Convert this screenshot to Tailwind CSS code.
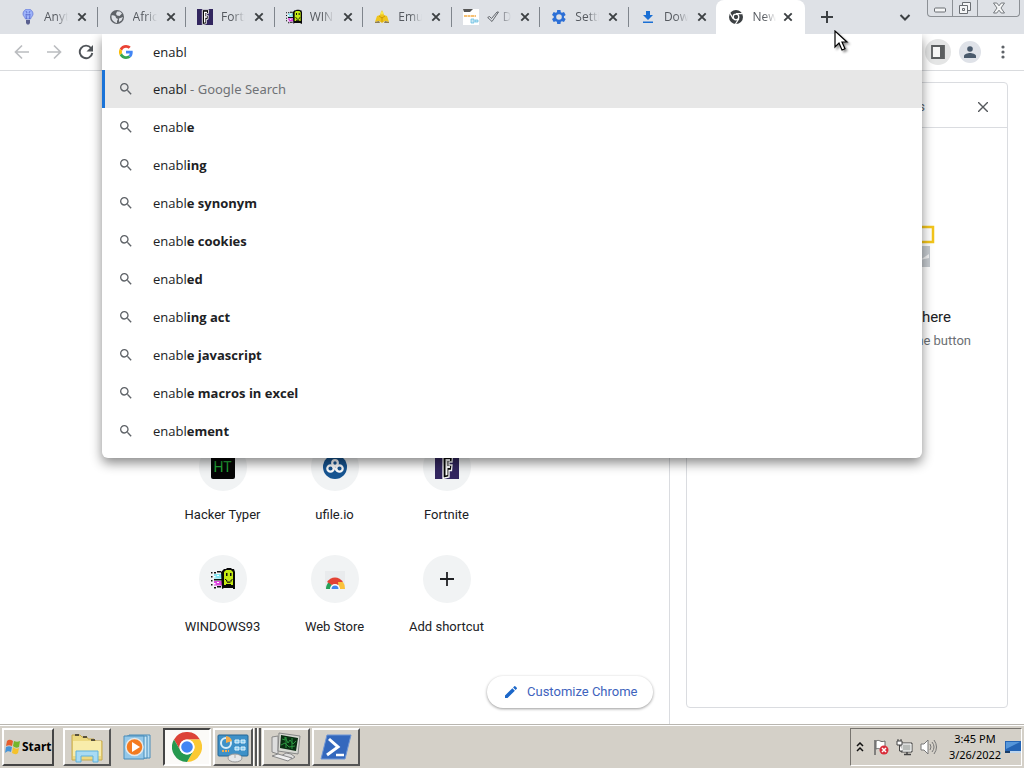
<!DOCTYPE html>
<html lang="en">
<head>
<meta charset="utf-8">
<meta name="viewport" content="width=device-width, initial-scale=1">
<title>New Tab</title>
<script src="https://cdn.jsdelivr.net/npm/@tailwindcss/browser@4"></script>
</head>
<body class="relative flex h-screen flex-col overflow-hidden bg-white font-['Open_Sans','Noto_Sans',sans-serif] text-[13px] text-[#202124]">

<svg class="hidden" aria-hidden="true">
  <symbol id="x" viewBox="0 0 10 10"><path d="M1.300 1.300 8.700 8.700M8.700 1.300 1.300 8.700" stroke="currentColor" stroke-width="1.900"/></symbol>
  <symbol id="search" viewBox="0 0 24 24"><path fill="currentColor" d="M15.5 14h-.79l-.28-.27A6.47 6.47 0 0 0 16 9.5 6.5 6.5 0 1 0 9.5 16c1.61 0 3.09-.59 4.23-1.57l.27.28v.79l5 4.99L20.49 19l-4.99-5zm-6 0C7.01 14 5 11.99 5 9.5S7.01 5 9.5 5 14 7.01 14 9.5 11.99 14 9.5 14z"/></symbol>
  <symbol id="win93" viewBox="0 0 24 24">
    <path d="M0 5h1.500v1.500H0zM3 5h2v1.500H3zM6 4h4v1.500H6zM0 9h1.500v1.500H0zM0 13h1.500v1.500H0zM0 17h1.500v1.500H0zM3 20h2v1.500H3zM6 19h4v1.500H6zM3 12h8v1.500H3z" fill="#111"/>
    <path d="M3 7h8v4.500H3z" fill="#86e6f2"/><path d="M3 14h8v4.500H3z" fill="#dc45de"/><path d="M3 9h1.500v1.500H3zM6 8h2v1H6zM3 16h1.500v1.500H3zM6 15h2v1H6z" fill="#fff"/>
    <path d="M10 5 13 2h2l1-1h4l1 1h2l1 3v17h-2v-1h-9l-2 1z" fill="#080808"/><path d="M13 5l2-2h5l2 2v13h-2v-1h-5v1h-2z" fill="#c5ea12"/>
    <path d="M15 6h1.500v3H15zM19 6h1.500v3H19zM14 12h1.200v1H14zM15 13h1.200v1.500H15zM16 14.500h3.500v1.200H16zM19.500 13h1.200v1.500h-1.200zM20.500 12h1v1h-1z" fill="#111"/>
  </symbol>
  <symbol id="fort" viewBox="0 0 24 24"><path fill="#32265f" d="M0 0h24v24H0z"/><path d="M8 1h9.500L17 7h-3v3h3l-.5 5.500H14V22l-6 1.500z" fill="#080808" stroke="#fff" stroke-width="1.300"/><path d="M10.500 4H15v2h-2.500v5H15v2h-2.500v7l-2 .5z" fill="#fff"/></symbol>
  <symbol id="pointer" viewBox="0 0 16 22"><path d="M1 1v16l4-4 3 7 3-1.300-3-6.700h5z" fill="#fff" stroke="#000" stroke-width="1.200"/></symbol>
</svg>

<header class="flex h-[34px] shrink-0 bg-[#dee1e6] pl-2">
  <nav aria-label="Tabs" class="grid w-[797px] shrink-0 grid-cols-9 text-xs text-[#55595f]">
    <div class="flex items-center pl-3">
      <svg class="size-4 shrink-0" viewBox="0 0 16 16"><path d="M8 0a5 5 0 0 0-5 5c0 2 2 3 2.500 5h5C11 8 13 7 13 5a5 5 0 0 0-5-5z" fill="#9db3fa" stroke="#6478d8" stroke-width=".8"/><path d="M6.500 10 6 5l2 1 2-1-.5 5M6 2l1 2M10 2 9 4" stroke="#5664c8" stroke-width=".8" fill="none"/><path d="M6 11h4v3l-1 1.500H7L6 14z" fill="#5a6090"/></svg>
      <a href="#" class="ml-2 w-6 shrink-0 overflow-hidden whitespace-nowrap mask-r-from-50%">Anything</a>
      <button aria-label="Close" class="ml-[9px]"><svg class="size-2.5 text-[#3c4043]"><use href="#x"/></svg></button>
    </div>
    <div class="flex items-center"><span class="mr-[11px] h-5 w-px shrink-0 bg-[#7f858c]"></span>
      <svg class="size-4 shrink-0" viewBox="0 0 16 16"><circle cx="8" cy="8" r="7" fill="#5f6368"/><path d="M2.500 6.500C5 6 7 7 7 9l2 1-1 2v2C5 13.500 2 11 2.500 6.500zM8 2.500h3l2 2-2.500 2.500L8 6.500 7 5zM10 9.500l4-1.500-1.500 3.500L10 13z" fill="#dee1e6"/></svg>
      <a href="#" class="ml-2 w-6 shrink-0 overflow-hidden whitespace-nowrap mask-r-from-50%">Africa</a>
      <button aria-label="Close" class="ml-[9px]"><svg class="size-2.5 text-[#3c4043]"><use href="#x"/></svg></button>
    </div>
    <div class="flex items-center"><span class="mr-[11px] h-5 w-px shrink-0 bg-[#7f858c]"></span>
      <svg class="size-4 shrink-0"><use href="#fort"/></svg>
      <a href="#" class="ml-2 w-6 shrink-0 overflow-hidden whitespace-nowrap mask-r-from-50%">Fortnite</a>
      <button aria-label="Close" class="ml-[9px]"><svg class="size-2.5 text-[#3c4043]"><use href="#x"/></svg></button>
    </div>
    <div class="flex items-center"><span class="mr-[11px] h-5 w-px shrink-0 bg-[#7f858c]"></span>
      <svg class="size-4 shrink-0"><use href="#win93"/></svg>
      <a href="#" class="ml-2 w-6 shrink-0 overflow-hidden whitespace-nowrap mask-r-from-50%">WINDOWS93</a>
      <button aria-label="Close" class="ml-[9px]"><svg class="size-2.5 text-[#3c4043]"><use href="#x"/></svg></button>
    </div>
    <div class="flex items-center"><span class="mr-[11px] h-5 w-px shrink-0 bg-[#7f858c]"></span>
      <svg class="size-4 shrink-0" viewBox="0 0 16 16"><path d="M8 1 10 6l3 1 2 6-4-1-3 2-3-2-4 1 2-6 3-1z" fill="#efc51d"/><path d="m5 7 3 2 3-2M8 8v5" stroke="#c48e00" stroke-width=".8" fill="none"/><path d="M1 13l4-1 1 2H1zM11 12l4 1v1h-5z" fill="#8b7c55"/><circle cx="8" cy="4" r="1.500" fill="#f9e94c"/></svg>
      <a href="#" class="ml-2 w-6 shrink-0 overflow-hidden whitespace-nowrap mask-r-from-50%">Emulator</a>
      <button aria-label="Close" class="ml-[9px]"><svg class="size-2.5 text-[#3c4043]"><use href="#x"/></svg></button>
    </div>
    <div class="flex items-center"><span class="mr-[11px] h-5 w-px shrink-0 bg-[#7f858c]"></span>
      <svg class="size-4 shrink-0" viewBox="0 0 16 16"><path fill="#fff" d="M0 0h16v16H0z"/><path d="M0 0h10L7 3H1z" fill="#555"/><path d="M1 7h12" stroke="#f3ac45" stroke-width="1.500" stroke-dasharray="3 .5"/><path d="M8 10h3v4H8zM12 11h3v2h-3z" fill="#c8e7f4" stroke="#5ab9df" stroke-width=".7"/></svg>
      <a href="#" class="ml-2 flex w-6 shrink-0 items-center gap-1 overflow-hidden whitespace-nowrap mask-r-from-50%"><svg class="size-3 shrink-0" viewBox="0 0 12 12"><path d="m.7 6.500 1.800-1 2 2L10 1h1.500L5 10.500z" fill="none" stroke="#55595f" stroke-width=".9"/></svg>Download</a>
      <button aria-label="Close" class="ml-[9px]"><svg class="size-2.5 text-[#3c4043]"><use href="#x"/></svg></button>
    </div>
    <div class="flex items-center"><span class="mr-[11px] h-5 w-px shrink-0 bg-[#7f858c]"></span>
      <svg class="size-4 shrink-0" viewBox="0 0 24 24"><path fill="#2c6fd6" d="M19.400 13a7.500 7.500 0 0 0 0-2l2.600-2-2.500-4.400-3 1.200-1.800-1L14.200 1.500H9.300l-.5 3.300-1.800 1-3-1.200L1.500 9l2.600 2a7.500 7.500 0 0 0 0 2l-2.600 2L4 19.400l3-1.200 1.800 1 .5 3.300h4.900l.5-3.300 1.800-1 3 1.200L22 15zM12 16.200a4.200 4.200 0 1 1 0-8.400 4.200 4.200 0 0 1 0 8.400z"/></svg>
      <a href="#" class="ml-2 w-6 shrink-0 overflow-hidden whitespace-nowrap mask-r-from-50%">Settings</a>
      <button aria-label="Close" class="ml-[9px]"><svg class="size-2.5 text-[#3c4043]"><use href="#x"/></svg></button>
    </div>
    <div class="flex items-center"><span class="mr-[11px] h-5 w-px shrink-0 bg-[#7f858c]"></span>
      <svg class="size-4 shrink-0" viewBox="0 0 16 16"><path fill="#1a6fd4" d="M6 2h4v4h3l-5 5-5-5h3zM3 12.500h10V14H3z"/></svg>
      <a href="#" class="ml-2 w-6 shrink-0 overflow-hidden whitespace-nowrap mask-r-from-50%">Downloads</a>
      <button aria-label="Close" class="ml-[9px]"><svg class="size-2.5 text-[#3c4043]"><use href="#x"/></svg></button>
    </div>
    <div class="flex items-center rounded-t-lg bg-white pl-3">
      <svg class="size-4 shrink-0" viewBox="0 0 16 16"><circle cx="8" cy="8" r="7" fill="#3c4043"/><circle cx="8" cy="8" r="2.800" fill="#3c4043" stroke="#fff" stroke-width="1.300"/><path d="M8 4.700h6.500M5.100 9.600 2 4.200M10.900 9.600 7.500 15" stroke="#fff" stroke-width="1.200"/></svg>
      <a href="#" class="ml-2 w-6 shrink-0 overflow-hidden whitespace-nowrap mask-r-from-50%">New Tab</a>
      <button aria-label="Close" class="ml-[7px]"><svg class="size-2.5 text-[#3c4043]"><use href="#x"/></svg></button>
    </div>
  </nav>
  <button aria-label="New tab" class="ml-4 shrink-0"><svg class="size-3" viewBox="0 0 12 12"><path d="M6 0v12M0 6h12" stroke="#3c4043" stroke-width="2"/></svg></button>
  <button aria-label="Search tabs" class="mr-4 ml-auto"><svg class="size-3" viewBox="0 0 12 12"><path d="m1.500 4 4.500 4.500L10.500 4" fill="none" stroke="#3c4043" stroke-width="2"/></svg></button>
  <div class="mr-1 flex h-[17px] w-[93px] rounded-b border border-t-0 border-[#8c9095]">
    <button aria-label="Minimize" class="flex w-[25px] items-center justify-center border-r border-[#8c9095]"><svg class="mt-1 h-1.5 w-3" viewBox="0 0 12 6"><rect x=".5" y="1" width="11" height="4" rx="1" fill="#f5f6f7" stroke="#6a6e73"/></svg></button>
    <button aria-label="Restore" class="flex w-[25px] items-center justify-center border-r border-[#8c9095]"><svg class="size-3.5" viewBox="0 0 14 14"><path d="M4.500 1.500h8v8h-8z" fill="#f5f6f7" stroke="#6a6e73"/><path d="M1.500 4.500h8v8h-8z" fill="#f5f6f7" stroke="#6a6e73"/><path d="M4.500 7.500h2v2h-2z" fill="none" stroke="#6a6e73"/></svg></button>
    <button aria-label="Close window" class="flex flex-1 items-center justify-center"><svg class="h-3 w-3.5" viewBox="0 0 14 12"><path d="M1.500 1h3.300L7 3.800 9.200 1h3.300L9 6l3.500 5H9.200L7 8.200 4.800 11H1.500L5 6z" fill="#f5f6f7" stroke="#6a6e73" stroke-width=".9"/></svg></button>
  </div>
</header>

<div class="flex h-[37px] shrink-0 items-center border-b border-[#d9dbde] pl-3.5 text-[#5f6368]">
  <button aria-label="Back" class="text-[#bbbdc0]"><svg class="size-4" viewBox="0 0 16 16"><path d="M15 8H2M8 1.500 1.500 8 8 14.500" fill="none" stroke="currentColor" stroke-width="1.700"/></svg></button>
  <button aria-label="Forward" class="ml-4 text-[#bbbdc0]"><svg class="size-4" viewBox="0 0 16 16"><path d="M1 8h13M8 1.500 14.500 8 8 14.500" fill="none" stroke="currentColor" stroke-width="1.700"/></svg></button>
  <button aria-label="Reload" class="ml-4"><svg class="size-4" viewBox="0 0 16 16"><path d="M13 4a6.300 6.300 0 1 0 1.300 5" fill="none" stroke="#505459" stroke-width="1.900"/><path d="M15 1v6.500H8.500z" fill="#505459"/></svg></button>
  <button aria-label="Side panel" class="ml-auto flex size-[26px] items-center justify-center rounded-full bg-[#e4e5e5]"><svg class="size-3.5" viewBox="0 0 14 14"><path d="M1 1h12v12H1z" fill="#f6f6f5" stroke="#5b5e5f" stroke-width="1.800"/><path d="M9 1h4v12H9z" fill="#5b5e5f"/></svg></button>
  <button aria-label="Profile" class="ml-2 flex size-[22px] items-center justify-center rounded-full bg-[#dfe2e8]"><svg class="size-3" viewBox="0 0 12 12"><circle cx="6" cy="3" r="2.800" fill="#4a5a6c"/><path d="M0 12V10c0-2 4-3 6-3s6 1 6 3v2z" fill="#4a5a6c"/></svg></button>
  <button aria-label="Menu" class="mr-[19px] ml-5"><svg class="h-3.5 w-1" viewBox="0 0 4 14"><g fill="#5f6368"><circle cx="2" cy="2" r="1.600"/><circle cx="2" cy="7" r="1.600"/><circle cx="2" cy="12" r="1.600"/></g></svg></button>
</div>

<div class="flex min-h-0 flex-1 font-[Roboto,sans-serif]">
  <main class="flex flex-1 flex-col items-center justify-end border-r border-[#dadce0] pb-4">
    <div class="grid grid-cols-3 text-center">
      <a href="#" class="flex h-28 w-28 flex-col items-center"><span class="flex size-12 items-center justify-center rounded-full bg-[#f1f3f4]"><span class="flex size-6 items-center justify-center rounded-xs bg-[#050505] text-sm text-[#22a637]">HT</span></span><span class="mt-3.5">Hacker Typer</span></a>
      <a href="#" class="flex h-28 w-28 flex-col items-center"><span class="flex size-12 items-center justify-center rounded-full bg-[#f1f3f4]"><svg class="size-6" viewBox="0 0 24 24"><circle cx="12" cy="12" r="12" fill="#175592"/><g fill="none" stroke="#fff" stroke-width="2.200"><circle cx="12" cy="8" r="2.800"/><circle cx="7.500" cy="13.500" r="3.200"/><circle cx="16.500" cy="13.500" r="3.200"/><path d="m9.500 11 5 5"/></g></svg></span><span class="mt-3.5">ufile.io</span></a>
      <a href="#" class="flex h-28 w-28 flex-col items-center"><span class="flex size-12 items-center justify-center rounded-full bg-[#f1f3f4]"><svg class="size-6"><use href="#fort"/></svg></span><span class="mt-3.5">Fortnite</span></a>
      <a href="#" class="flex h-28 w-28 flex-col items-center"><span class="flex size-12 items-center justify-center rounded-full bg-[#f1f3f4]"><svg class="size-6"><use href="#win93"/></svg></span><span class="mt-3.5">WINDOWS93</span></a>
      <a href="#" class="flex h-28 w-28 flex-col items-center"><span class="flex size-12 items-center justify-center rounded-full bg-[#f1f3f4]"><svg class="size-6" viewBox="0 0 24 24"><path fill="#e9ebed" d="M2 4h20v18H2z"/><path d="M3 22a9 9 0 0 1 3-7l4 4-1 3z" fill="#27a15a"/><path d="M4 15a9.500 9.500 0 0 1 16 0l-5 3H9z" fill="#e34234"/><path d="M15 15h5a10 10 0 0 1 2 7h-6z" fill="#fbc23c"/><path d="M7 22a5 5 0 0 1 10 0z" fill="#fff"/><path d="M8.500 22a3.500 3.500 0 0 1 7 0z" fill="#4286ee"/></svg></span><span class="mt-3.5">Web Store</span></a>
      <button class="flex h-28 w-28 flex-col items-center"><span class="flex size-12 items-center justify-center rounded-full bg-[#f1f3f4]"><svg class="size-3.5" viewBox="0 0 14 14"><path d="M7 0v14M0 7h14" stroke="#202124" stroke-width="1.800"/></svg></span><span class="mt-3.5">Add shortcut</span></button>
    </div>
    <button class="mt-[9px] mr-4 flex h-8 w-[166px] items-center gap-2 self-end rounded-full bg-white pl-4 text-[#3e63bd] shadow-[0_1px_3px_#0006]"><svg class="size-4" viewBox="0 0 24 24"><path fill="#1b67c9" d="M3 17.250V21h3.750L17.800 9.940l-3.750-3.750zM20.700 7.040a1 1 0 0 0 0-1.410L18.370 3.300a1 1 0 0 0-1.410 0l-1.830 1.830 3.750 3.750z"/></svg>Customize Chrome</button>
  </main>
  <aside class="w-[354px] shrink-0 px-4 pt-[11px] pb-4">
    <div class="flex h-full flex-col rounded border border-[#dadce0]">
      <div class="flex h-[45px] shrink-0 items-center justify-end border-b border-[#dadce0] pt-1 pr-[19px] text-[#5f6368]"><span>Bookmarks</span><button aria-label="Close side panel" class="ml-[53px]"><svg class="size-2.5" viewBox="0 0 10 10"><path d="m0 0 10 10M10 0 0 10" stroke="#55585c" stroke-width="1.400"/></svg></button></div>
      <div class="flex flex-col items-end pt-[97px] pr-9">
        <svg class="mr-9 h-11 w-40" viewBox="0 0 160 44"><path d="M1 2h157v15H1z" fill="none" stroke="#f3c51b" stroke-width="2.500"/><path d="M2 21h153v21H2z" fill="#c6cbd0"/><path d="m145 35 9-6v4z" fill="#f3f4f5"/></svg>
        <p class="mt-[38px] mr-5 text-[15px] leading-5">You'll find your reading list here</p>
        <p class="mt-1 leading-5 text-[#6b6f74]">To add a page, click the button</p>
      </div>
    </div>
  </aside>
</div>

<footer class="flex h-11 shrink-0 items-center border-t border-[#b9b6b0] bg-[#d4d0c8] px-0.5 text-[11px] text-black shadow-[inset_0_1px_0_#fff]">
  <button class="flex h-[38px] w-[52px] items-center border-2 border-t-white border-r-[#444] border-b-[#444] border-l-white font-['Noto_Sans','Open_Sans',sans-serif] text-xs font-bold">
    <svg class="size-[18px] shrink-0" viewBox="0 0 18 18"><path d="M3 3c2-2 4-1 6 0L8 8C6 7 4 7 2 8z" fill="#e65d2b"/><path d="M10 3c2 1 4 1 6 0l-1 6c-2 1-4 1-6-1z" fill="#75b62c"/><path d="M2 9c2-1 4-1 6 0l-1 5c-2-1-4-1-6 1z" fill="#4594d7"/><path d="M9 9c2 2 4 2 6 1l-1 5c-2 2-4 1-6 0z" fill="#f4c22c"/></svg>Start</button>
  <button aria-label="Explorer" class="ml-[9px] flex h-[38px] w-12 items-center justify-center border-2 border-t-white border-r-[#555] border-b-[#555] border-l-white"><svg class="size-8" viewBox="0 0 32 32"><path d="M1 4h8l2 2h5l1 2h6l2 2h6v19H1z" fill="#edd981" stroke="#c6a94b"/><path d="M2 10h28v15H2z" fill="#f8ecaa"/><path d="M4 3h4v2H4zM12 5h4v2h-4zM20 8h4v2h-4z" fill="#59513b"/><path d="M5 31V20h22v11h-5v-6H10v6z" fill="#a8dbf3" stroke="#5eb1dc"/></svg></button>
  <button aria-label="Media player" class="ml-1 flex h-[38px] w-11 items-center justify-center"><svg class="size-7" viewBox="0 0 28 28"><path d="M6 2h21v23H6z" fill="#b9ddf2" stroke="#498cba"/><path d="M4 3h20v22H4z" fill="#c9e8f8" stroke="#498cba"/><path d="M1 3h20v23H1z" fill="#94c8e9" stroke="#498cba"/><circle cx="11.500" cy="14" r="8.500" fill="#f47b20" stroke="#e5e9eb" stroke-width="1.500"/><path d="m9 9 8 5-8 5z" fill="#fff"/></svg></button>
  <button aria-label="Chrome" class="ml-1 flex h-[38px] w-12 items-center justify-center border-2 border-t-[#444] border-r-white border-b-white border-l-[#444] bg-[#fbfaf8]"><svg class="size-[30px]" viewBox="0 0 30 30"><path d="M2 7.500A15 15 0 0 1 28 7.500H15A7.500 7.500 0 0 0 8.500 18.800z" fill="#dc4338"/><path d="M28 7.500A15 15 0 0 1 15 30l6.500-11.200A7.500 7.500 0 0 0 15 7.500z" fill="#fbc934"/><path d="M15 30A15 15 0 0 1 2 7.500l6.500 11.300a7.500 7.500 0 0 0 13 0z" fill="#25994f"/><circle cx="15" cy="15" r="7.500" fill="#fff"/><circle cx="15" cy="15" r="5.800" fill="#4285f4"/></svg></button>
  <button aria-label="Control Panel" class="ml-0.5 flex h-[38px] w-10 items-center justify-center border-2 border-t-white border-r-[#555] border-b-[#555] border-l-white"><svg class="size-8 shrink-0" viewBox="0 0 32 32"><rect x="1" y="4" width="30" height="21" rx="1" fill="#3e91c8" stroke="#246796"/><circle cx="9" cy="12" r="5" fill="none" stroke="#d9edf8" stroke-width="2"/><path d="M9 12V5a7 7 0 0 1 6 5z" fill="#f2ac4c"/><path d="M18 9h4v3h-4zM24 9h4v3h-4zM18 16h4v3h-4zM24 16h4v3h-4z" fill="#83caef" stroke="#e3f3fc"/><path d="M5 20h7" stroke="#f2ac4c" stroke-width="2" stroke-dasharray="2 1"/><ellipse cx="18" cy="27" rx="7" ry="4" fill="#e6e8ea" stroke="#999"/><path d="M18 23v4" stroke="#aaa"/></svg></button>
  <span class="h-[38px] w-1 border-r-2 border-l border-r-[#555] border-l-white"></span><span class="h-[38px] w-1 border-r-2 border-l border-r-[#555] border-l-white"></span>
  <button aria-label="System monitor" class="ml-px flex h-[38px] w-12 items-center justify-center border-2 border-t-white border-r-[#555] border-b-[#555] border-l-white"><svg class="size-8" viewBox="0 0 32 32"><path d="m2 6 6-1v18l-6-2z" fill="#ddd" stroke="#888"/><path d="m9 2 21 3-2 18-20-3z" fill="#d6d8d2" stroke="#888"/><path d="m11 4 17 3-2 13-16-3z" fill="#092e12"/><path d="m12 8 3 1v-3l3 6 2-3 3 4 3-3M11 14l4-2 4 4 6-1M16 6v11M22 7v11" fill="none" stroke="#2b9740"/><path d="m16 22 5 1 4 3-3 2-11-3z" fill="#ddd" stroke="#888"/><path d="m2 25 6-2 14 4-4 3z" fill="#eee" stroke="#888"/></svg></button>
  <button aria-label="PowerShell" class="ml-0.5 flex h-[38px] w-12 items-center justify-center border-2 border-t-white border-r-[#555] border-b-[#555] border-l-white"><svg class="size-8" viewBox="0 0 32 32"><path d="M7 4h24l-6 24H1z" fill="#3468bd" stroke="#6e96d6"/><path d="m9 8 9 8-11 8" fill="none" stroke="#fff" stroke-width="3"/><path d="M16 24h8" stroke="#fff" stroke-width="2.500"/></svg></button>
  <div class="ml-auto flex h-[38px] w-[172px] items-center border border-t-[#77746f] border-r-white border-b-white border-l-[#77746f] pl-[5px]">
    <button aria-label="Show hidden icons"><svg class="h-2.5 w-2" viewBox="0 0 8 10"><path d="m1 4 3-3 3 3M1 9l3-3 3 3" fill="none" stroke="#111" stroke-width="1.500"/></svg></button>
    <svg class="ml-2 size-[18px] shrink-0" viewBox="0 0 18 18"><path d="M3 17V2" stroke="#666" stroke-width="1.500"/><path d="M4 3c4-2 4 2 9 0v8c-5 2-5-2-9 0z" fill="#fff" stroke="#666"/><circle cx="12" cy="12" r="4.500" fill="#d92e3b"/><path d="m10 10 4 4m0-4-4 4" stroke="#fff" stroke-width="1.500"/></svg>
    <svg class="ml-1.5 size-[18px] shrink-0" viewBox="0 0 18 18"><path d="M5 5h11v9H5z" fill="#b8bbb8" stroke="#444"/><path d="M6 6h9v7H6z" fill="none" stroke="#fff"/><path d="M8 16.500h7M11 14v2" stroke="#444" stroke-width="1.500"/><path d="M1 3h5v4H1zM2 1v2M5 1v2M3.500 7v6H7" fill="#fff" stroke="#444"/></svg>
    <svg class="ml-1.5 size-[18px] shrink-0" viewBox="0 0 18 18"><path d="M1 6h3l4-4v14l-4-4H1z" fill="#fff" stroke="#777"/><path d="M10 6q2 3 0 6M12 4q4 5 0 10M14 2q5 7 0 14" fill="none" stroke="#777"/></svg>
    <time class="ml-2.5 w-[54px] shrink-0 text-center font-['Noto_Sans','Open_Sans',sans-serif] leading-4 whitespace-nowrap">3:45 PM<br>3/26/2022</time>
    <svg class="ml-[3px] h-3.5 w-4 shrink-0" viewBox="0 0 16 14"><path d="M0 1h16v10H0z" fill="#2464b4"/><path d="M1 2h14L1 9z" fill="#5596da"/><path d="M0 11h16v2H0z" fill="#bdd5ec"/><path d="M0 11h5v2H0z" fill="#1b3d66"/></svg>
  </div>
</footer>

<section aria-label="Address and suggestions" class="absolute top-[34px] right-[102px] left-[102px] overflow-hidden rounded-b-md bg-white pb-2 shadow-[0_5px_12px_#0007] [clip-path:inset(0_-24px_-24px_-24px)]">
  <div class="flex h-9 items-center pl-[17px]">
    <svg class="size-3.5" viewBox="0 0 48 48"><path fill="#EA4335" d="M24 9.500c3.540 0 6.710 1.220 9.210 3.600l6.850-6.850C35.900 2.380 30.470 0 24 0 14.620 0 6.510 5.380 2.560 13.220l7.980 6.190C12.430 13.720 17.740 9.500 24 9.500z"/><path fill="#4285F4" d="M46.980 24.550c0-1.570-.15-3.090-.38-4.550H24v9.020h12.940c-.58 2.960-2.260 5.480-4.780 7.180l7.730 6c4.510-4.180 7.090-10.360 7.090-17.650z"/><path fill="#FBBC05" d="M10.530 28.590a14.500 14.500 0 0 1 0-9.180l-7.980-6.190a24 24 0 0 0 0 21.560z"/><path fill="#34A853" d="M24 48c6.480 0 11.930-2.130 15.890-5.810l-7.730-6c-2.150 1.450-4.920 2.300-8.160 2.300-6.260 0-11.570-4.220-13.470-9.910l-7.980 6.190C6.510 42.620 14.620 48 24 48z"/></svg>
    <input aria-label="Address bar" value="enabl" class="ml-5 flex-1 pt-0.5 outline-none">
  </div>
  <ul class="[&_a]:flex [&_a]:h-[38px] [&_a]:items-center [&_a]:pl-4 [&_span]:ml-[19px] [&_span]:pt-0.5 [&_span]:whitespace-pre [&_svg]:size-4 [&_svg]:text-[#5f6368]">
    <li class="border-l-3 border-[#1a73d8] bg-[#e7e7e7]"><a href="#" class="-ml-[3px]"><svg><use href="#search"/></svg><span>enabl<i class="font-['Noto_Sans','Open_Sans',sans-serif] text-[#6f7276] not-italic"> - Google Search</i></span></a></li>
    <li><a href="#"><svg><use href="#search"/></svg><span>enabl<b>e</b></span></a></li>
    <li><a href="#"><svg><use href="#search"/></svg><span>enabl<b>ing</b></span></a></li>
    <li><a href="#"><svg><use href="#search"/></svg><span>enabl<b>e synonym</b></span></a></li>
    <li><a href="#"><svg><use href="#search"/></svg><span>enabl<b>e cookies</b></span></a></li>
    <li><a href="#"><svg><use href="#search"/></svg><span>enabl<b>ed</b></span></a></li>
    <li><a href="#"><svg><use href="#search"/></svg><span>enabl<b>ing act</b></span></a></li>
    <li><a href="#"><svg><use href="#search"/></svg><span>enabl<b>e javascript</b></span></a></li>
    <li><a href="#"><svg><use href="#search"/></svg><span>enabl<b>e macros in excel</b></span></a></li>
    <li><a href="#"><svg><use href="#search"/></svg><span>enabl<b>ement</b></span></a></li>
  </ul>
</section>

<svg class="pointer-events-none absolute top-[30px] left-[834px] h-[22px] w-4 drop-shadow-[2px_2px_1px_#0006]"><use href="#pointer"/></svg>
</body>
</html>
